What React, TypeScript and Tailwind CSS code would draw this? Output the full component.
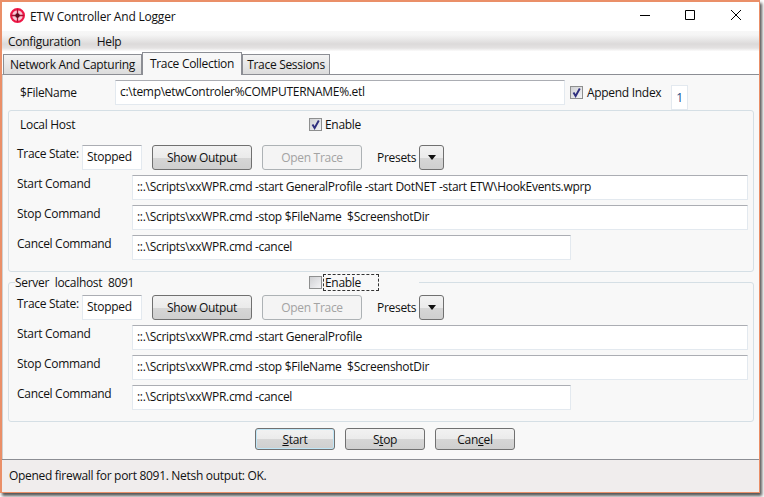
import type {ReactNode} from "react"

const font = "font-['Open_Sans','Noto_Sans',sans-serif] text-[12px] tracking-[-0.3px] text-[#111]"

const Box = ({text, className}: {text: string; className: string}) => (
  <div className={`flex h-[25px] items-center border border-[#e3e9ef] border-t-[#abadb3] bg-white px-[4px] pb-[1px] whitespace-pre ${className}`}>
    {text}
  </div>
)

const Btn = ({children, className = ""}: {children: ReactNode; className?: string}) => (
  <div className={`flex items-center justify-center rounded-[3px] border border-[#707070] bg-[linear-gradient(#f2f2f2_0%,#ebebeb_50%,#d6d6d6_51%,#cfcfcf_100%)] ${className}`}>
    {children}
  </div>
)

const Check = ({checked}: {checked: boolean}) => (
  <div className="flex h-[13px] w-[13px] shrink-0 items-center justify-center border border-[#8e8f8f] bg-[linear-gradient(135deg,#cfd0d3,#f4f4f6)]">
    {checked && (
      <svg viewBox="0 0 11 11" className="h-[11px] w-[11px]">
        <path d="M2.5 5.5 L4.6 9 L8.8 1.5" fill="none" stroke="#2f2f7f" strokeWidth="1.9"/>
      </svg>
    )}
  </div>
)

const Group = ({title, enabled, server, start}: {title: string; enabled: boolean; server?: boolean; start: string}) => (
  <div className={`mx-[5px] rounded-[3px] border border-[#d5dfe5] pr-[5px] pl-[8px] ${server ? "mt-[10px] h-[140px]" : "mt-0 h-[162px]"}`}>
    {server ? (
      <div className="-mt-[9px] -ml-[2px] flex h-[17px] w-[404px] items-center bg-[#f8f8f8]">
        <span className="w-[294px] whitespace-pre">{title}</span>
        <Check checked={enabled}/>
        <span className="ml-[1px] flex h-[17px] w-[56px] items-center border border-dashed border-[#333] pl-[1px]">Enable</span>
      </div>
    ) : (
      <div className="flex h-[34px] items-center pb-[7px] pl-[3px]">
        <span className="w-[289px]">{title}</span>
        <Check checked={enabled}/>
        <span className="ml-[3px]">Enable</span>
      </div>
    )}
    <div className={`flex h-[25px] ${server ? "mt-[4px]" : ""}`}>
      <span className="w-[65px] leading-[17px]">Trace State:</span>
      <Box text="Stopped" className="w-[60px] border-[#e3e9ef]"/>
      <Btn className="ml-[10px] w-[100px]">Show Output</Btn>
      <div className="ml-[10px] flex w-[100px] items-center justify-center rounded-[3px] border border-[#adb2b5] bg-[#f4f4f4] text-[#a3a3a3]">Open Trace</div>
      <span className="ml-[15px] flex w-[42px] items-center pt-[1px]">Presets</span>
      <Btn className="w-[25px]">
        <svg viewBox="0 0 8 5" className="h-[5px] w-[8px]"><path d="M0 0H8L4 5Z" fill="#111"/></svg>
      </Btn>
    </div>
    <div className="mt-[5px] flex">
      <span className="w-[115px] leading-[17px]">Start Comand</span>
      <Box text={start} className="flex-1"/>
    </div>
    <div className="mt-[5px] flex">
      <span className="w-[115px] leading-[17px]">Stop Command</span>
      <Box text="::.\Scripts\xxWPR.cmd -stop $FileName  $ScreenshotDir" className="flex-1"/>
    </div>
    <div className="mt-[5px] flex">
      <span className="w-[115px] leading-[17px]">Cancel Command</span>
      <Box text="::.\Scripts\xxWPR.cmd -cancel" className="w-[439px]"/>
    </div>
  </div>
)

const Tab = ({label, className}: {label: string; className: string}) => (
  <div className={`flex items-center justify-center border border-b-0 border-[#8c8e94] ${className}`}>{label}</div>
)

export default function App() {
  return (
    <div className={`h-[497px] w-[764px] bg-white ${font}`}>
      <div className="flex h-[493px] w-[760px] flex-col border-2 border-b-[1px] border-r-[1px] border-[#ea8f68] shadow-[2px_3px_3px_#555]">
        {/* title bar */}
        <div className="flex h-[29px] shrink-0 items-center bg-white">
          <svg viewBox="0 0 16 16" className="mb-[2px] ml-[8px] h-[15px] w-[15px]">
            <circle cx="8" cy="8" r="6.8" fill="#f7c9d5" stroke="#ee1746" strokeWidth="2.4"/>
            <path d="M8 1.5V14.5M1.5 8H14.5" stroke="#a80f2e" strokeWidth="1.4"/>
            <circle cx="8" cy="8" r="2.4" fill="#5a1020"/>
          </svg>
          <span className="ml-[5px] tracking-[-0.2px]">ETW Controller And Logger</span>
          <div className="mb-[3px] ml-auto flex items-center">
            <svg viewBox="0 0 10 10" className="h-[10px] w-[10px]"><path d="M0 5.5H10" stroke="#000" strokeWidth="1"/></svg>
            <svg viewBox="0 0 10 10" className="ml-[35px] h-[10px] w-[10px]"><path d="M.5.5H9.5V9.5H.5Z" fill="none" stroke="#000"/></svg>
            <svg viewBox="0 0 10 10" className="mr-[18px] ml-[36px] h-[10px] w-[10px]"><path d="M0 0L10 10M10 0L0 10" stroke="#000"/></svg>
          </div>
        </div>
        {/* menu */}
        <div className="flex h-[20px] shrink-0 items-center gap-[16px] bg-[linear-gradient(#f7f7f7_0%,#f5f5f5_20%,#dcdada_65%,#e4e2e2_85%,#fbfbfb_100%)] pt-[2px] pl-[6px]">
          <span>Configuration</span>
          <span>Help</span>
        </div>
        {/* tabs */}
        <div className="flex h-[23px] shrink-0 items-end bg-white pl-[1px]">
          <Tab label="Network And Capturing" className="h-[20px] w-[139px] bg-[linear-gradient(#f3f3f3,#dcdcdc)]"/>
          <Tab label="Trace Collection" className="relative z-10 -mb-[1px] h-[23px] w-[100px] bg-[#f8f8f8]"/>
          <Tab label="Trace Sessions" className="h-[20px] w-[88px] bg-[linear-gradient(#f3f3f3,#dcdcdc)]"/>
        </div>
        {/* content */}
        <div className="flex flex-1 flex-col border-t border-t-[#8c8e94] border-l border-l-[#d0d0d0] bg-[#f8f8f8]">
          <div className="flex h-[35px] shrink-0 pt-[5px]">
            <span className="ml-[17px] w-[95px] leading-[25px]">$FileName</span>
            <Box text="c:\temp\etwControler%COMPUTERNAME%.etl" className="w-[450px]"/>
            <div className="ml-[5px] flex h-[25px] items-center">
              <Check checked/>
              <span className="ml-[4px] w-[84px]">Append Index</span>
            </div>
            <div className="mt-[5px] flex h-[25px] w-[17px] items-center justify-center border border-[#e3e9ef] bg-white text-[#1a4f88]">1</div>
          </div>
          <Group title="Local Host" enabled start="::.\Scripts\xxWPR.cmd -start GeneralProfile -start DotNET -start ETW\HookEvents.wprp"/>
          <Group title="Server  localhost  8091" enabled={false} server start="::.\Scripts\xxWPR.cmd -start GeneralProfile"/>
          <div className="mt-[6px] flex justify-center gap-[10px] pl-[8px]">
            <Btn className="h-[22px] w-[80px] border-[#3c7fb1] pt-[1px] shadow-[inset_0_0_0_1px_#bfe6f7]"><span><u>S</u>tart</span></Btn>
            <Btn className="h-[22px] w-[80px] pt-[1px]"><span>S<u>t</u>op</span></Btn>
            <Btn className="h-[22px] w-[80px] pt-[1px]"><span>Can<u>c</u>el</span></Btn>
          </div>
        </div>
        {/* status bar */}
        <div className="flex h-[33px] shrink-0 items-center border-t border-t-[#8c8e94] bg-[#f0eded] pl-[7px]">
          Opened firewall for port 8091. Netsh output: OK.
        </div>
      </div>
    </div>
  )
}
